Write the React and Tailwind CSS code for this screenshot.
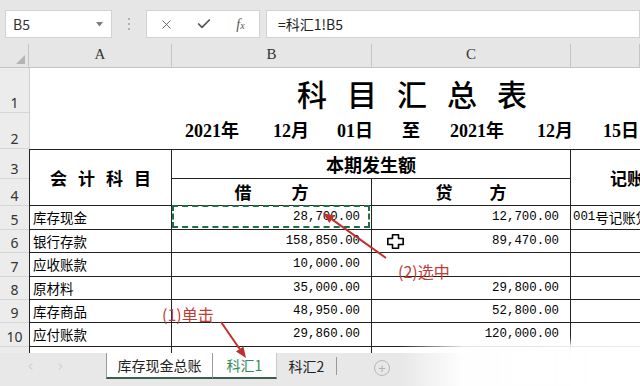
import React from 'react';
import { X, Check, ChevronLeft, ChevronRight } from 'lucide-react';

const sans = "font-['Noto_Sans_CJK_SC',sans-serif]";
const mono = "font-['Liberation_Mono','Noto_Sans_CJK_SC',monospace]";
const serif = "font-['Liberation_Serif','Noto_Sans_CJK_SC',serif]";
const line = 'border-[#222]';

const rows = [
  { n: 6, name: '银行存款', debit: '158,850.00', credit: '89,470.00' },
  { n: 7, name: '应收账款', debit: '10,000.00', credit: '' },
  { n: 8, name: '原材料', debit: '35,000.00', credit: '29,800.00' },
  { n: 9, name: '库存商品', debit: '48,950.00', credit: '52,800.00' },
  { n: 10, name: '应付账款', debit: '29,860.00', credit: '120,000.00' },
];

const dates = [
  { t: '2021年', w: 'w-[88px]' },
  { t: '12月', w: 'w-[64px]' },
  { t: '01日', w: 'w-[65px]' },
  { t: '至', w: 'w-[48px]' },
  { t: '2021年', w: 'w-[87px]' },
  { t: '12月', w: 'w-[66px]' },
  { t: '15日', w: 'w-[60px]' },
];

function FormulaBar() {
  return (
    <div className="h-[44px] bg-[#e6e6e6] flex items-start pt-[10px]">
      <div className="ml-[5px] w-[107px] h-[28px] bg-white border border-[#d2d2d2] flex items-center justify-between pl-[7px] pr-[8px]">
        <span className={`${sans} text-[14px] text-[#333]`}>B5</span>
        <svg width="7" height="5" viewBox="0 0 7 5"><polygon points="0,0 7,0 3.5,4.5" fill="#7a7a7a" /></svg>
      </div>
      <div className="w-[34px] h-[28px] flex flex-col items-center justify-center gap-[3px]">
        <span className="w-[2px] h-[2px] bg-[#b0b0b0]" />
        <span className="w-[2px] h-[2px] bg-[#b0b0b0]" />
        <span className="w-[2px] h-[2px] bg-[#b0b0b0]" />
      </div>
      <div className="w-[114px] h-[28px] bg-white border border-[#d2d2d2] flex items-center pl-px">
        <div className="w-[38px] flex justify-center"><X size={15} strokeWidth={1.4} color="#555" /></div>
        <div className="w-[38px] flex justify-center"><Check size={16} strokeWidth={2.6} color="#555" /></div>
        <div className="w-[38px] flex justify-center">
          <span className={`${serif} italic text-[14px] text-[#555]`}>f<span className="text-[10px]">x</span></span>
        </div>
      </div>
      <div className="ml-[6px] flex-1 h-[28px] bg-white border border-[#d2d2d2] flex items-center pl-[11px]">
        <span className={`${sans} text-[14px] text-[#222]`}>=科汇1!B5</span>
      </div>
    </div>
  );
}

function RowHead({ n }) {
  return (
    <div className="bg-[#ececec] border-b border-[#d6d6d6] flex items-end justify-center pb-[1px] overflow-hidden">
      <span className="font-['Noto_Sans',sans-serif] text-[14px] leading-none text-[#333] pb-[1px]">{n}</span>
    </div>
  );
}

function Sheet() {
  return (
    <div className="grid grid-cols-[29px_143px_200px_199px_69px] grid-rows-[24px_45px_36px_30px_27px_24px_23px_24px_23px_23px_24px_6px] bg-white">
      <div className="bg-[#e6e6e6] border-r border-b border-[#c4c4c4] flex items-end justify-end pr-[3px] pb-[3px]">
        <svg width="9" height="9" viewBox="0 0 9 9"><polygon points="9,0 9,9 0,9" fill="#b4b4b4" /></svg>
      </div>
      {['A', 'B', 'C', ''].map((h, i) => (
        <div key={i} className={`bg-[#e6e6e6] border-r border-b border-[#c4c4c4] flex items-end justify-center pb-[2px] ${serif} text-[15px] text-[#333]`}>{h}</div>
      ))}

      <RowHead n="1" />
      <div className="border-l border-[#d0d0d0]" />
      <div className="col-span-3 flex items-end pl-[125px] pb-[5px] whitespace-nowrap">
        <span className={`${sans} text-[30px] leading-none font-medium tracking-[20px] text-black`}>科目汇总表</span>
      </div>

      <RowHead n="2" />
      <div className="border-l border-[#d0d0d0]" />
      <div className={`col-span-3 flex items-center pl-[13px] whitespace-nowrap ${serif} text-[18px] font-bold text-black`}>
        {dates.map((d, i) => <span key={i} className={`${d.w} shrink-0`}>{d.t}</span>)}
      </div>

      <RowHead n="3" />
      <div className={`row-span-2 border-l border-t border-r border-b ${line} flex items-center justify-center`}>
        <span className={`${sans} text-[17px] font-bold tracking-[11px] pl-[11px]`}>会计科目</span>
      </div>
      <div className={`col-span-2 border-t border-r border-b ${line} flex items-center justify-center`}>
        <span className={`${sans} text-[18px] font-bold`}>本期发生额</span>
      </div>
      <div className={`row-span-2 border-t border-b ${line} flex items-center pl-[39px] overflow-hidden whitespace-nowrap`}>
        <span className={`${sans} text-[17px] font-bold`}>记账凭证号</span>
      </div>

      <RowHead n="4" />
      <div className={`border-r border-b ${line} flex items-center justify-center gap-[40px] ${sans} text-[17px] font-bold`}>
        <span>借</span><span>方</span>
      </div>
      <div className={`border-r border-b ${line} flex items-center justify-center gap-[37px] ${sans} text-[17px] font-bold`}>
        <span>贷</span><span>方</span>
      </div>

      <RowHead n="5" />
      <div className={`border-l border-r border-b ${line} flex items-center pl-[3px] ${sans} text-[13.5px]`}>库存现金</div>
      <div className={`relative border-r border-b ${line} flex items-center justify-end pr-[11px] ${mono} text-[12.4px]`}>
        28,700.00
        <div className="absolute left-0 right-[1px] top-[-1px] bottom-[1px] border-2 border-dashed border-[#1f6e45]" />
      </div>
      <div className={`border-r border-b ${line} flex items-center justify-end pr-[11px] ${mono} text-[12.4px]`}>12,700.00</div>
      <div className={`border-b ${line} flex items-center pl-[2px] whitespace-nowrap overflow-hidden`}>
        <span className={`${mono} text-[12.4px]`}>001</span>
        <span className={`${sans} text-[13.5px]`}>号记账凭证</span>
      </div>

      {rows.map((r) => (
        <React.Fragment key={r.n}>
          <RowHead n={String(r.n)} />
          <div className={`border-l border-r border-b ${line} flex items-center pl-[3px] ${sans} text-[13.5px]`}>{r.name}</div>
          <div className={`border-r border-b ${line} flex items-center justify-end pr-[11px] ${mono} text-[12.4px]`}>{r.debit}</div>
          <div className={`border-r border-b ${line} flex items-center justify-end pr-[11px] ${mono} text-[12.4px]`}>{r.credit}</div>
          <div className={`border-b ${line}`} />
        </React.Fragment>
      ))}

      <div className="bg-[#ececec]" />
      <div className={`border-l border-r ${line}`} />
      <div className={`border-r ${line}`} />
      <div className={`border-r ${line}`} />
      <div />
    </div>
  );
}

function TabBar() {
  return (
    <div className="h-[33px] bg-[#e8e8e8] flex items-start">
      <div className="w-[106px] h-[26px] flex items-center">
        <div className="ml-[25px]"><ChevronLeft size={11} color="#bdbdbd" /></div>
        <div className="ml-[19px]"><ChevronRight size={11} color="#bdbdbd" /></div>
      </div>
      <div className={`w-[107px] h-[26px] bg-white border-l border-r border-[#9a9a9a] border-b-2 border-b-[#3a5f4c] flex items-center justify-center ${sans} text-[14px] text-[#222]`}>库存现金总账</div>
      <div className={`w-[64px] h-[26px] bg-white border-r border-[#c8c8c8] border-b-2 border-b-[#3a5f4c] flex items-center justify-center ${sans} text-[14px] text-[#2f8a57]`}>科汇1</div>
      <div className="w-[60px] h-[26px] flex items-center">
        <span className={`flex-1 text-center ${sans} text-[14px] text-[#222]`}>科汇2</span>
        <span className="h-[18px] border-r border-[#9a9a9a]" />
      </div>
      <div className="ml-[37px] mt-[7px] w-[16px] h-[16px] rounded-full border border-[#b8b8b8] flex items-center justify-center">
        <span className="text-[#b0b0b0] text-[13px] leading-none">+</span>
      </div>
    </div>
  );
}

export default function App() {
  return (
    <div className="relative w-[640px] h-[386px] overflow-hidden bg-white">
      <FormulaBar />
      <Sheet />
      <TabBar />

      {/* screenshot annotations */}
      <svg className="absolute left-0 top-0 pointer-events-none" width="640" height="386">
        <line x1="386" y1="258" x2="332" y2="219.4" stroke="#c0302a" strokeWidth="2" />
        <polygon points="323,213 334.6,215.7 329.3,223.1" fill="#c0302a" />
        <line x1="221" y1="322" x2="239.7" y2="349" stroke="#c0302a" strokeWidth="2" />
        <polygon points="246,358 236,351.6 243.4,346.4" fill="#c0302a" />
      </svg>
      <span className={`absolute left-[398px] top-[263px] ${sans} text-[16px] leading-none text-[#c23a35]`}>(2)选中</span>
      <span className={`absolute left-[162px] top-[306px] ${sans} text-[16px] leading-none text-[#c23a35]`}>(1)单击</span>
      <svg className="absolute left-[387px] top-[234px]" width="17" height="15" viewBox="0 0 17 15">
        <polygon points="5.5,0.8 11.5,0.8 11.5,4.5 16.2,4.5 16.2,10.5 11.5,10.5 11.5,14.2 5.5,14.2 5.5,10.5 0.8,10.5 0.8,4.5 5.5,4.5" fill="white" stroke="black" strokeWidth="1.6" strokeLinejoin="round" />
      </svg>
      <div className="absolute left-[400px] top-[342px] w-[250px] h-[50px] bg-linear-to-r from-white/0 via-white/95 via-25% to-white blur-[3px]" />
    </div>
  );
}
